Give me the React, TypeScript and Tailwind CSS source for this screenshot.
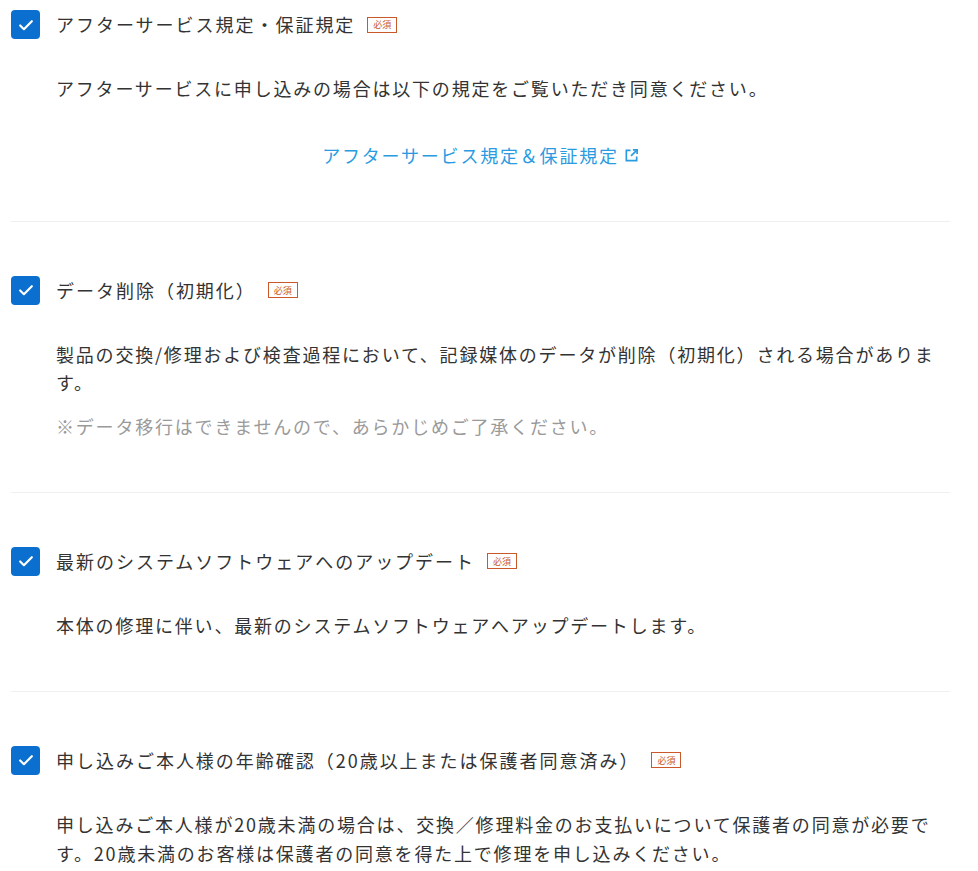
import React from "react";

const font = { fontFamily: '"Noto Sans CJK JP", "Noto Sans", sans-serif' };

function Check() {
  return (
    <span className="flex h-[29px] w-[29px] shrink-0 items-center justify-center rounded-[4px] bg-[#0b6fd0]">
      <svg width="20" height="20" viewBox="0 0 24 24" fill="none" stroke="#fff" strokeWidth="2.6" strokeLinecap="round" strokeLinejoin="round">
        <path d="M5 12.5l4.5 4.5L19 7.5" />
      </svg>
    </span>
  );
}

function Badge() {
  return (
    <span className="ml-[12px] flex h-[16px] w-[30px] items-center justify-center border border-[#c9592a] bg-white text-[9px] leading-none tracking-normal text-[#c9592a]">
      必須
    </span>
  );
}

function Heading({ children }: { children: React.ReactNode }) {
  return (
    <div className="flex h-[29px] items-center">
      <Check />
      <span className="ml-[16px] text-[18px] leading-[29px] tracking-[0.11em] text-[#333]">{children}</span>
      <Badge />
    </div>
  );
}

export default function App() {
  return (
    <div className="min-h-[871px] bg-white" style={font}>
      <div className="ml-[11px] w-[939px] pt-[10px]">
        <section className="border-b border-[#efefef] pb-[51px]">
          <Heading>アフターサービス規定・保証規定</Heading>
          <p className="ml-[45px] mt-[35px] text-[18px] leading-[28.8px] tracking-[0.1em] text-[#333]">
            アフターサービスに申し込みの場合は以下の規定をご覧いただき同意ください。
          </p>
          <div className="mt-[38px] flex justify-center">
            <a className="flex items-center text-[18px] leading-[28.8px] tracking-[0.1em] text-[#2a9be0]">
              アフターサービス規定＆保証規定
              <svg className="ml-[5px]" width="15" height="15" viewBox="0 0 16 16" fill="none" stroke="#2a9be0" strokeWidth="1.8">
                <path d="M7 2.5H2.5v11h11V9" />
                <path d="M9.5 2h4.5v4.5" />
                <path d="M14 2L7.5 8.5" />
              </svg>
            </a>
          </div>
        </section>

        <section className="border-b border-[#efefef] pb-[51px] pt-[54px]">
          <Heading>データ削除（初期化）</Heading>
          <div className="ml-[45px] mr-[5px] mt-[35px] text-[18px] leading-[28.8px] tracking-[0.1em]">
            <p className="text-[#333]">
              製品の交換/修理および検査過程において、記録媒体のデータが削除（初期化）される場合があります。
            </p>
            <p className="mt-[15px] text-[#9a9a9a]">※データ移行はできませんので、あらかじめご了承ください。</p>
          </div>
        </section>

        <section className="border-b border-[#efefef] pb-[51px] pt-[54px]">
          <Heading>最新のシステムソフトウェアへのアップデート</Heading>
          <p className="ml-[45px] mt-[35px] text-[18px] leading-[28.8px] tracking-[0.1em] text-[#333]">
            本体の修理に伴い、最新のシステムソフトウェアへアップデートします。
          </p>
        </section>

        <section className="pt-[54px]">
          <Heading>申し込みご本人様の年齢確認（20歳以上または保護者同意済み）</Heading>
          <p className="ml-[45px] mr-[5px] mt-[35px] text-[18px] leading-[29.5px] tracking-[0.1em] text-[#333]">
            申し込みご本人様が20歳未満の場合は、交換／修理料金のお支払いについて保護者の同意が必要です。20歳未満のお客様は保護者の同意を得た上で修理を申し込みください。
          </p>
        </section>
      </div>
    </div>
  );
}
